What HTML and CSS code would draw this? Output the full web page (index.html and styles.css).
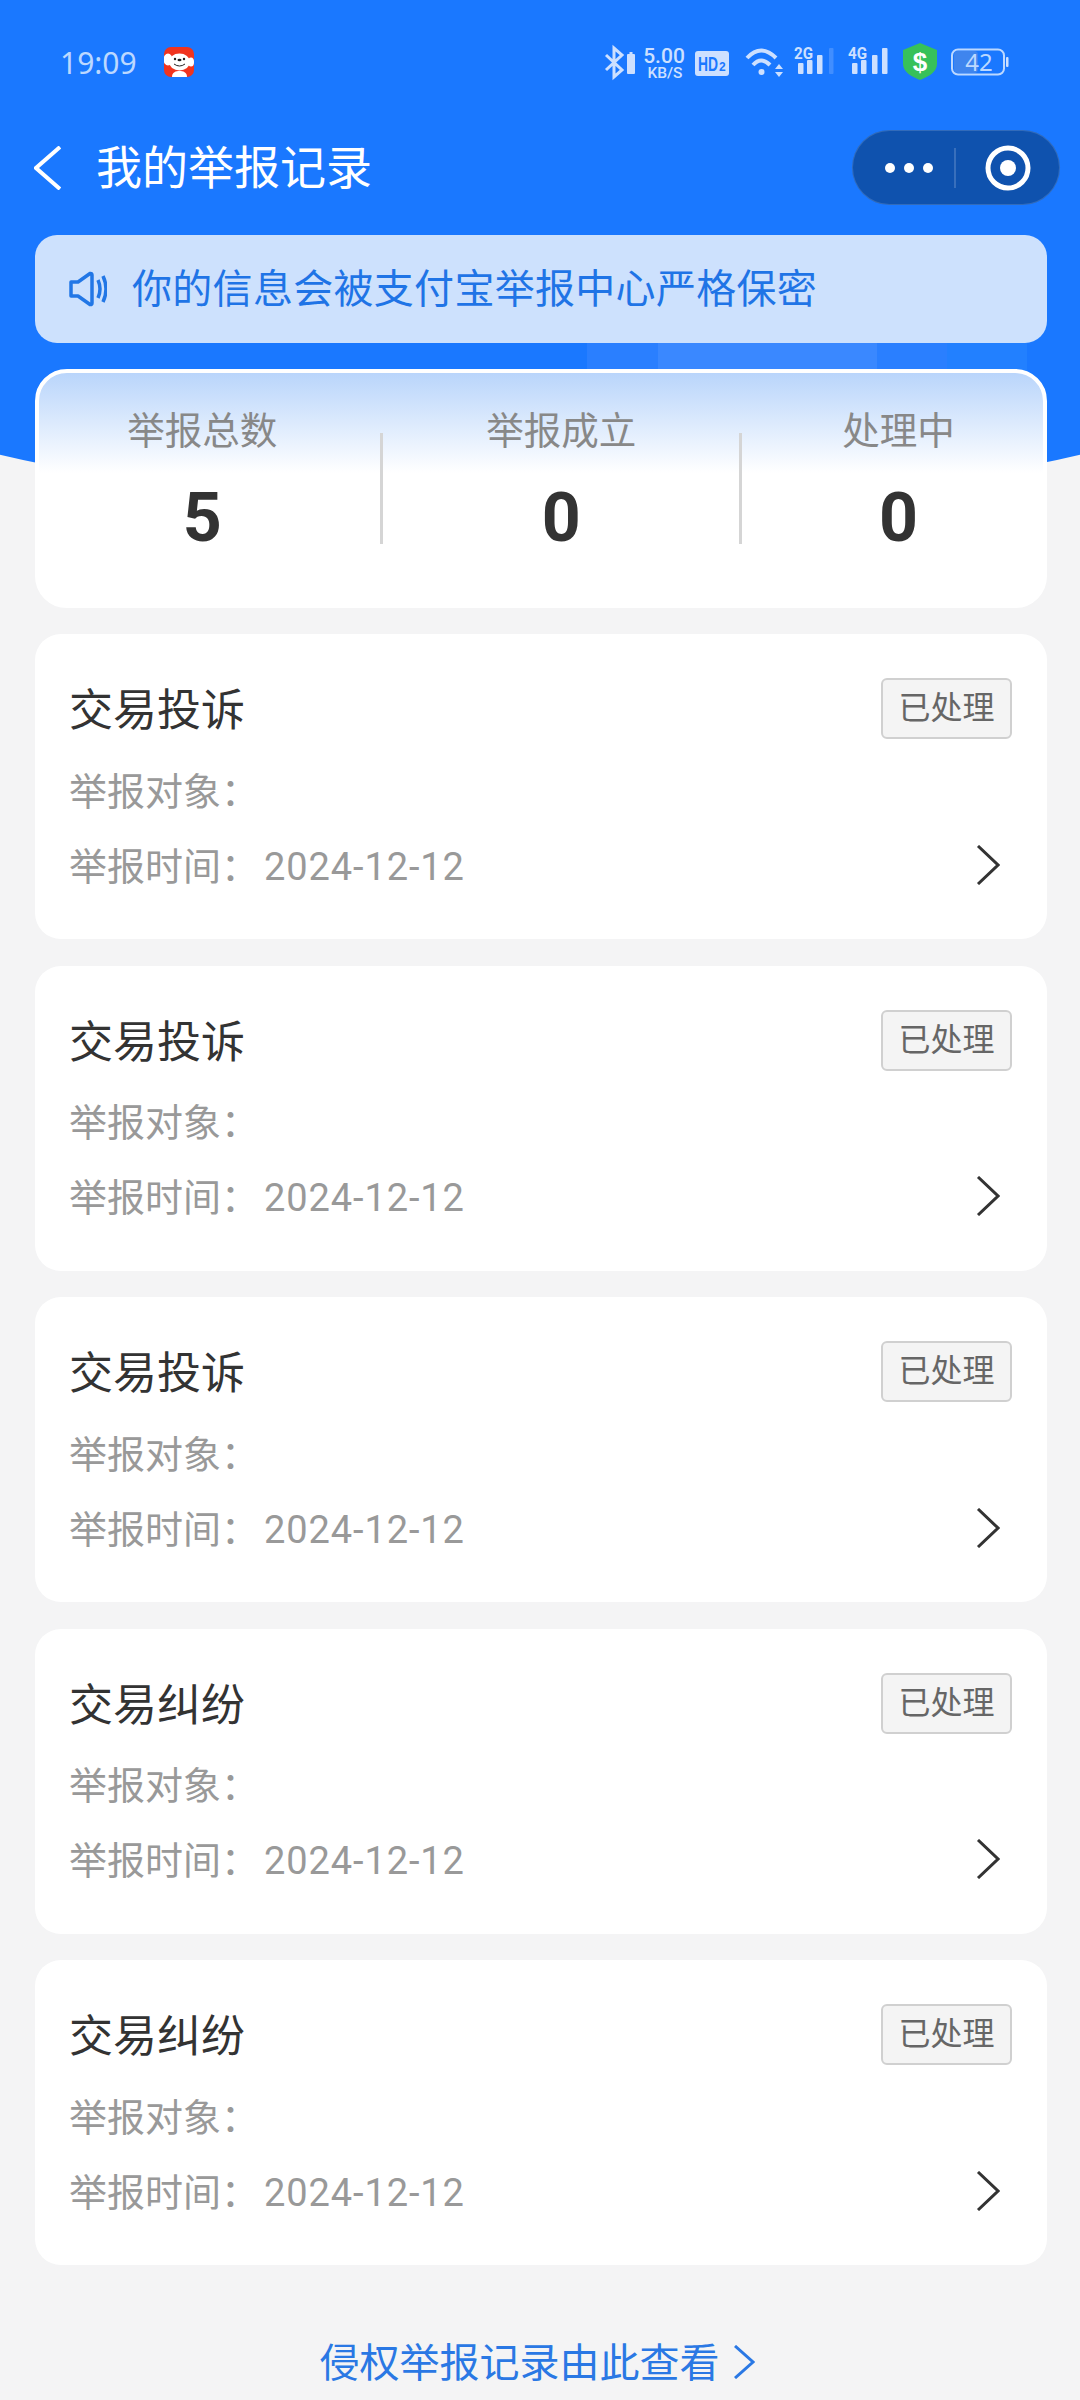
FILE: index.html
```html
<!DOCTYPE html>
<html lang="zh-CN">
<head>
    <meta charset="UTF-8">
    <meta name="viewport" content="width=device-width, initial-scale=1.0">
    <title>我的举报记录</title>
    <link rel="stylesheet" href="styles.css">
</head>
<body>
    <div class="page">
        <!-- 顶部蓝色背景 -->
        <div class="hero-bg"></div>
        <div class="hero-shine"></div>

        <div class="status-bar">
            <span class="status-time">19:09</span>
            <svg class="status-app" width="31" height="30" viewBox="0 0 31 30">
                <rect x="0" y="0" width="30" height="30" rx="7" fill="#f0341f"/>
                <ellipse cx="15.5" cy="15" rx="10.5" ry="8.5" fill="#fff"/>
                <ellipse cx="4" cy="12.5" rx="4.5" ry="6" fill="#fff"/>
                <ellipse cx="27" cy="15" rx="3" ry="4.5" fill="#fff"/>
                <path d="M8 30 C8 25 12 24 15.5 24 C19 24 23 25 23 30 Z" fill="#fff"/>
                <circle cx="11" cy="12" r="1.2" fill="#222"/>
                <circle cx="20" cy="12" r="1.2" fill="#222"/>
                <ellipse cx="15.5" cy="13" rx="2" ry="1.2" fill="#222"/>
                <path d="M10 17 Q15.5 21 21 17" fill="none" stroke="#222" stroke-width="1"/>
            </svg>
            <svg class="status-icons" width="405" height="40" viewBox="604 42 405 40">
                <polyline class="ic-line" points="606,55 622,70 614,77 614,48 622,55 606,70"/>
                <path class="ic-fill" d="M628 54 h1.5 v-2 h3 v2 h1.5 a1 1 0 0 1 1 1 v18 a1 1 0 0 1 -1 1 h-6 a1 1 0 0 1 -1 -1 v-18 a1 1 0 0 1 1 -1 z"/>
                <text class="ic-text speed-num" x="664" y="63" text-anchor="middle">5.00</text>
                <text class="ic-text speed-unit" x="665" y="78" text-anchor="middle">KB/S</text>
                <rect class="ic-fill" x="695" y="51" width="34" height="25" rx="3"/>
                <text class="hd-text" x="698" y="71" textLength="20" lengthAdjust="spacingAndGlyphs">HD</text>
                <text class="hd-sub" x="719" y="71">2</text>
                <path class="ic-wifi" d="M747 58 Q761 43 776 58"/>
                <path class="ic-wifi" d="M753 65 Q761 56 770 65"/>
                <circle class="ic-fill" cx="761.500" cy="72" r="3"/>
                <path class="ic-fill" d="M779 64 l4 5 h-8 z M775 72 h8 l-4 5 z"/>
                <text class="ic-text net-text" x="794" y="59" textLength="19" lengthAdjust="spacingAndGlyphs">2G</text>
                <rect class="ic-fill" x="798" y="63" width="5.500" height="11" rx="1"/>
                <rect class="ic-fill" x="807" y="60" width="5.500" height="14" rx="1"/>
                <rect class="ic-fill" x="817" y="55" width="5.500" height="19" rx="1"/>
                <rect class="ic-faint" x="829" y="48" width="4.500" height="26" rx="1"/>
                <text class="ic-text net-text" x="848" y="59" textLength="19" lengthAdjust="spacingAndGlyphs">4G</text>
                <rect class="ic-fill" x="852" y="63" width="5.500" height="11" rx="1"/>
                <rect class="ic-fill" x="861" y="60" width="5.500" height="14" rx="1"/>
                <rect class="ic-fill" x="872" y="55" width="5.500" height="19" rx="1"/>
                <rect class="ic-fill" x="882" y="48" width="5.500" height="26" rx="1"/>
                <path class="ic-shield" d="M920 43 L937 50 V64 C937 72 928 77 920 80 C912 77 903 72 903 64 V50 Z"/>
                <text class="shield-text" x="920" y="71" text-anchor="middle">$</text>
                <rect class="batt-level" x="954" y="51" width="24" height="22" rx="4"/>
                <rect class="batt-frame" x="952" y="49.500" width="52" height="25" rx="6"/>
                <rect class="ic-fill" x="1006" y="57" width="2.500" height="10" rx="1"/>
                <text class="batt-text" x="979" y="71" text-anchor="middle">42</text>
            </svg>
        </div>

        <div class="nav-bar">
            <svg class="nav-back" width="27" height="44" viewBox="0 0 27 44">
                <polyline points="26,1 2,22 26,43"/>
            </svg>
            <div class="nav-title">我的举报记录</div>
            <div class="capsule">
                <svg width="208" height="75" viewBox="0 0 208 75">
                    <circle cx="38" cy="38" r="5" fill="#fff"/>
                    <circle cx="57" cy="38" r="5" fill="#fff"/>
                    <circle cx="76" cy="38" r="5" fill="#fff"/>
                    <line x1="103" y1="18" x2="103" y2="58" stroke="#fff" stroke-opacity="0.35" stroke-width="1"/>
                    <circle cx="156" cy="38" r="20" fill="none" stroke="#fff" stroke-width="5"/>
                    <circle cx="156" cy="38" r="8" fill="#fff"/>
                </svg>
            </div>
        </div>

        <div class="notice">
            <svg width="38" height="36" viewBox="0 0 38 36">
                <path class="notice-line" d="M2 11 H9 L21 2.500 Q23 2 23 4 V32 Q23 34 21 33.500 L9 25 H2 Z"/>
                <path class="notice-line" d="M29 9 Q33 18 29 27"/>
                <path class="notice-line" d="M34 5 Q40 18 34 31"/>
            </svg>
            <span>你的信息会被支付宝举报中心严格保密</span>
        </div>

        <div class="stats">
            <div class="stat-item">
                <div class="stat-label">举报总数</div>
                <div class="stat-num">5</div>
            </div>
            <div class="stat-line"></div>
            <div class="stat-item">
                <div class="stat-label">举报成立</div>
                <div class="stat-num">0</div>
            </div>
            <div class="stat-line"></div>
            <div class="stat-item">
                <div class="stat-label">处理中</div>
                <div class="stat-num">0</div>
            </div>
        </div>

        <div class="record-list">
            <div class="record">
                <div class="record-head">
                    <div class="record-title">交易投诉</div>
                    <div class="record-tag">已处理</div>
                </div>
                <div class="record-row">举报对象：</div>
                <div class="record-row">
                    <span>举报时间：<span class="record-date">2024-12-12</span></span>
                    <svg class="record-arrow" width="24" height="40" viewBox="0 0 24 40"><polyline points="2,1 22,20 2,39"/></svg>
                </div>
            </div>
            <div class="record">
                <div class="record-head">
                    <div class="record-title">交易投诉</div>
                    <div class="record-tag">已处理</div>
                </div>
                <div class="record-row">举报对象：</div>
                <div class="record-row">
                    <span>举报时间：<span class="record-date">2024-12-12</span></span>
                    <svg class="record-arrow" width="24" height="40" viewBox="0 0 24 40"><polyline points="2,1 22,20 2,39"/></svg>
                </div>
            </div>
            <div class="record">
                <div class="record-head">
                    <div class="record-title">交易投诉</div>
                    <div class="record-tag">已处理</div>
                </div>
                <div class="record-row">举报对象：</div>
                <div class="record-row">
                    <span>举报时间：<span class="record-date">2024-12-12</span></span>
                    <svg class="record-arrow" width="24" height="40" viewBox="0 0 24 40"><polyline points="2,1 22,20 2,39"/></svg>
                </div>
            </div>
            <div class="record">
                <div class="record-head">
                    <div class="record-title">交易纠纷</div>
                    <div class="record-tag">已处理</div>
                </div>
                <div class="record-row">举报对象：</div>
                <div class="record-row">
                    <span>举报时间：<span class="record-date">2024-12-12</span></span>
                    <svg class="record-arrow" width="24" height="40" viewBox="0 0 24 40"><polyline points="2,1 22,20 2,39"/></svg>
                </div>
            </div>
            <div class="record">
                <div class="record-head">
                    <div class="record-title">交易纠纷</div>
                    <div class="record-tag">已处理</div>
                </div>
                <div class="record-row">举报对象：</div>
                <div class="record-row">
                    <span>举报时间：<span class="record-date">2024-12-12</span></span>
                    <svg class="record-arrow" width="24" height="40" viewBox="0 0 24 40"><polyline points="2,1 22,20 2,39"/></svg>
                </div>
            </div>
        </div>

        <div class="more-link">
            <span>侵权举报记录由此查看</span>
            <svg width="22" height="34" viewBox="0 0 22 34"><polyline points="2,1 20,17 2,33"/></svg>
        </div>
    </div>
</body>
</html>
```

FILE: styles.css
```css
body {
    margin: 0;
    background-color: #f4f4f5;
    font-family: "Noto Sans CJK SC", "Noto Sans", sans-serif;
    color: #333;
}
.page {
    position: relative;
    width: 1080px;
    height: 2400px;
    overflow: hidden;
}
.hero-bg {
    position: absolute;
    top: 0;
    left: -160px;
    width: 1400px;
    height: 505px;
    background-color: #1a78ff;
    border-radius: 0 0 50% 50% / 0 0 138px 138px;
}
.hero-shine {
    position: absolute;
    top: 343px;
    left: 587px;
    width: 440px;
    height: 30px;
    background: linear-gradient(to right,
        #2a7fff 0, #2a7fff 71px,
        #3a88ff 71px, #3a88ff 290px,
        #2a7fff 290px, #2a7fff 360px,
        #2280ff 360px, #2280ff 440px);
}

/* 状态栏 */
.status-bar {
    position: relative;
    display: flex;
    align-items: center;
    height: 124px;
    padding: 0 71px 0 60px;
}
.status-time {
    font-family: "Noto Sans", sans-serif;
    font-size: 30px;
    color: #bcd8ff;
}
.status-app {
    margin-left: 27px;
}
.status-icons {
    margin-left: auto;
}
.ic-line {
    fill: none;
    stroke: #cde0ff;
    stroke-width: 3;
}
.ic-fill {
    fill: #cde0ff;
}
.ic-faint {
    fill: #cde0ff;
    opacity: 0.22;
}
.ic-wifi {
    fill: none;
    stroke: #cde0ff;
    stroke-width: 4;
}
.ic-shield {
    fill: #37c15a;
}
.ic-text {
    fill: #cde0ff;
    font-family: Roboto, sans-serif;
}
.speed-num {
    font-size: 21px;
    font-weight: 500;
}
.speed-unit {
    font-size: 15.500px;
    font-weight: 500;
}
.net-text {
    font-size: 17px;
    font-weight: bold;
}
.hd-text {
    fill: #1a78ff;
    font-family: "Liberation Sans", sans-serif;
    font-size: 20px;
    font-weight: bold;
}
.hd-sub {
    fill: #1a78ff;
    font-family: "Liberation Sans", sans-serif;
    font-size: 12px;
    font-weight: bold;
}
.shield-text {
    fill: #fff;
    font-family: "Liberation Sans", sans-serif;
    font-size: 26px;
    font-weight: bold;
}
.batt-level {
    fill: #3f85ee;
}
.batt-frame {
    fill: none;
    stroke: #bcd8ff;
    stroke-width: 2;
}
.batt-text {
    fill: #bcd8ff;
    font-family: "Noto Sans", sans-serif;
    font-size: 24px;
}

/* 导航栏 */
.nav-bar {
    position: relative;
    display: flex;
    align-items: center;
    height: 75px;
    margin-top: 6px;
    padding: 0 20px 0 34px;
}
.nav-back polyline {
    fill: none;
    stroke: #fff;
    stroke-width: 4;
}
.nav-title {
    margin: 0 0 7px 35px;
    font-size: 46px;
    color: #fff;
}
.capsule {
    margin-left: auto;
    width: 208px;
    height: 75px;
    background-color: #0f52ae;
    border-radius: 38px;
    box-shadow: inset 0 0 0 1px rgba(255, 255, 255, 0.15);
}

/* 提示条 */
.notice {
    position: relative;
    display: flex;
    align-items: center;
    height: 108px;
    margin: 30px 33px 0 35px;
    padding-left: 34px;
    box-sizing: border-box;
    background-color: #cde1fd;
    border-radius: 22px;
    font-size: 40px;
    color: #1f74e6;
}
.notice span {
    margin: 0 0 6px 25px;
    letter-spacing: 0.3px;
}
.notice-line {
    fill: none;
    stroke: #2277e6;
    stroke-width: 3.500;
    stroke-linejoin: round;
}

/* 统计卡片 */
.stats {
    position: relative;
    display: flex;
    justify-content: center;
    gap: 103px;
    height: 239px;
    margin: 26px 33px 0 35px;
    padding-top: 29px;
    box-sizing: border-box;
    background: linear-gradient(#b9d5fb, #fff 100px);
    border: 4px solid #fff;
    border-radius: 32px;
}
.stat-item {
    text-align: center;
}
.stat-item:last-child {
    margin-left: -3px;
}
.stat-label {
    font-size: 37.500px;
    line-height: 52px;
    color: #888;
}
.stat-num {
    margin-top: 28px;
    font-family: Roboto, sans-serif;
    font-size: 68px;
    font-weight: bold;
    line-height: 72px;
    color: #333;
}
.stat-line {
    width: 3px;
    height: 111px;
    margin-top: 31px;
    background-color: #d5d5d5;
}

/* 记录列表 */
.record-list {
    display: flex;
    flex-direction: column;
    gap: 26.500px;
    margin: 26px 33px 0 35px;
}
.record {
    height: 305px;
    padding: 44px 35px 0 34px;
    box-sizing: border-box;
    background-color: #fff;
    border-radius: 26px;
}
.record-head {
    display: flex;
    justify-content: space-between;
    align-items: flex-start;
    height: 61px;
    margin-bottom: 24px;
}
.record-title {
    font-size: 44px;
    line-height: 58px;
    color: #333;
}
.record-tag {
    width: 131px;
    height: 61px;
    box-sizing: border-box;
    background-color: #f4f4f4;
    border: 2px solid #d0d0d0;
    border-radius: 6px;
    font-size: 32px;
    line-height: 51px;
    text-align: center;
    color: #666;
}
.record-row {
    display: flex;
    justify-content: space-between;
    align-items: center;
    height: 50px;
    margin-bottom: 25px;
    font-size: 38px;
    color: #999;
}
.record-date {
    margin-left: 5px;
    font-family: Roboto, sans-serif;
    letter-spacing: 0.9px;
}
.record-arrow {
    margin: 3px 12px 0 0;
}
.record-arrow polyline {
    fill: none;
    stroke: #333;
    stroke-width: 3;
}

/* 底部链接 */
.more-link {
    display: flex;
    justify-content: center;
    align-items: center;
    gap: 13px;
    height: 60px;
    margin-top: 67px;
    padding-right: 6px;
    font-size: 40px;
    color: #2a78e4;
}
.more-link span {
    margin-bottom: 5px;
}
.more-link polyline {
    fill: none;
    stroke: #2a78e4;
    stroke-width: 3;
}
```
